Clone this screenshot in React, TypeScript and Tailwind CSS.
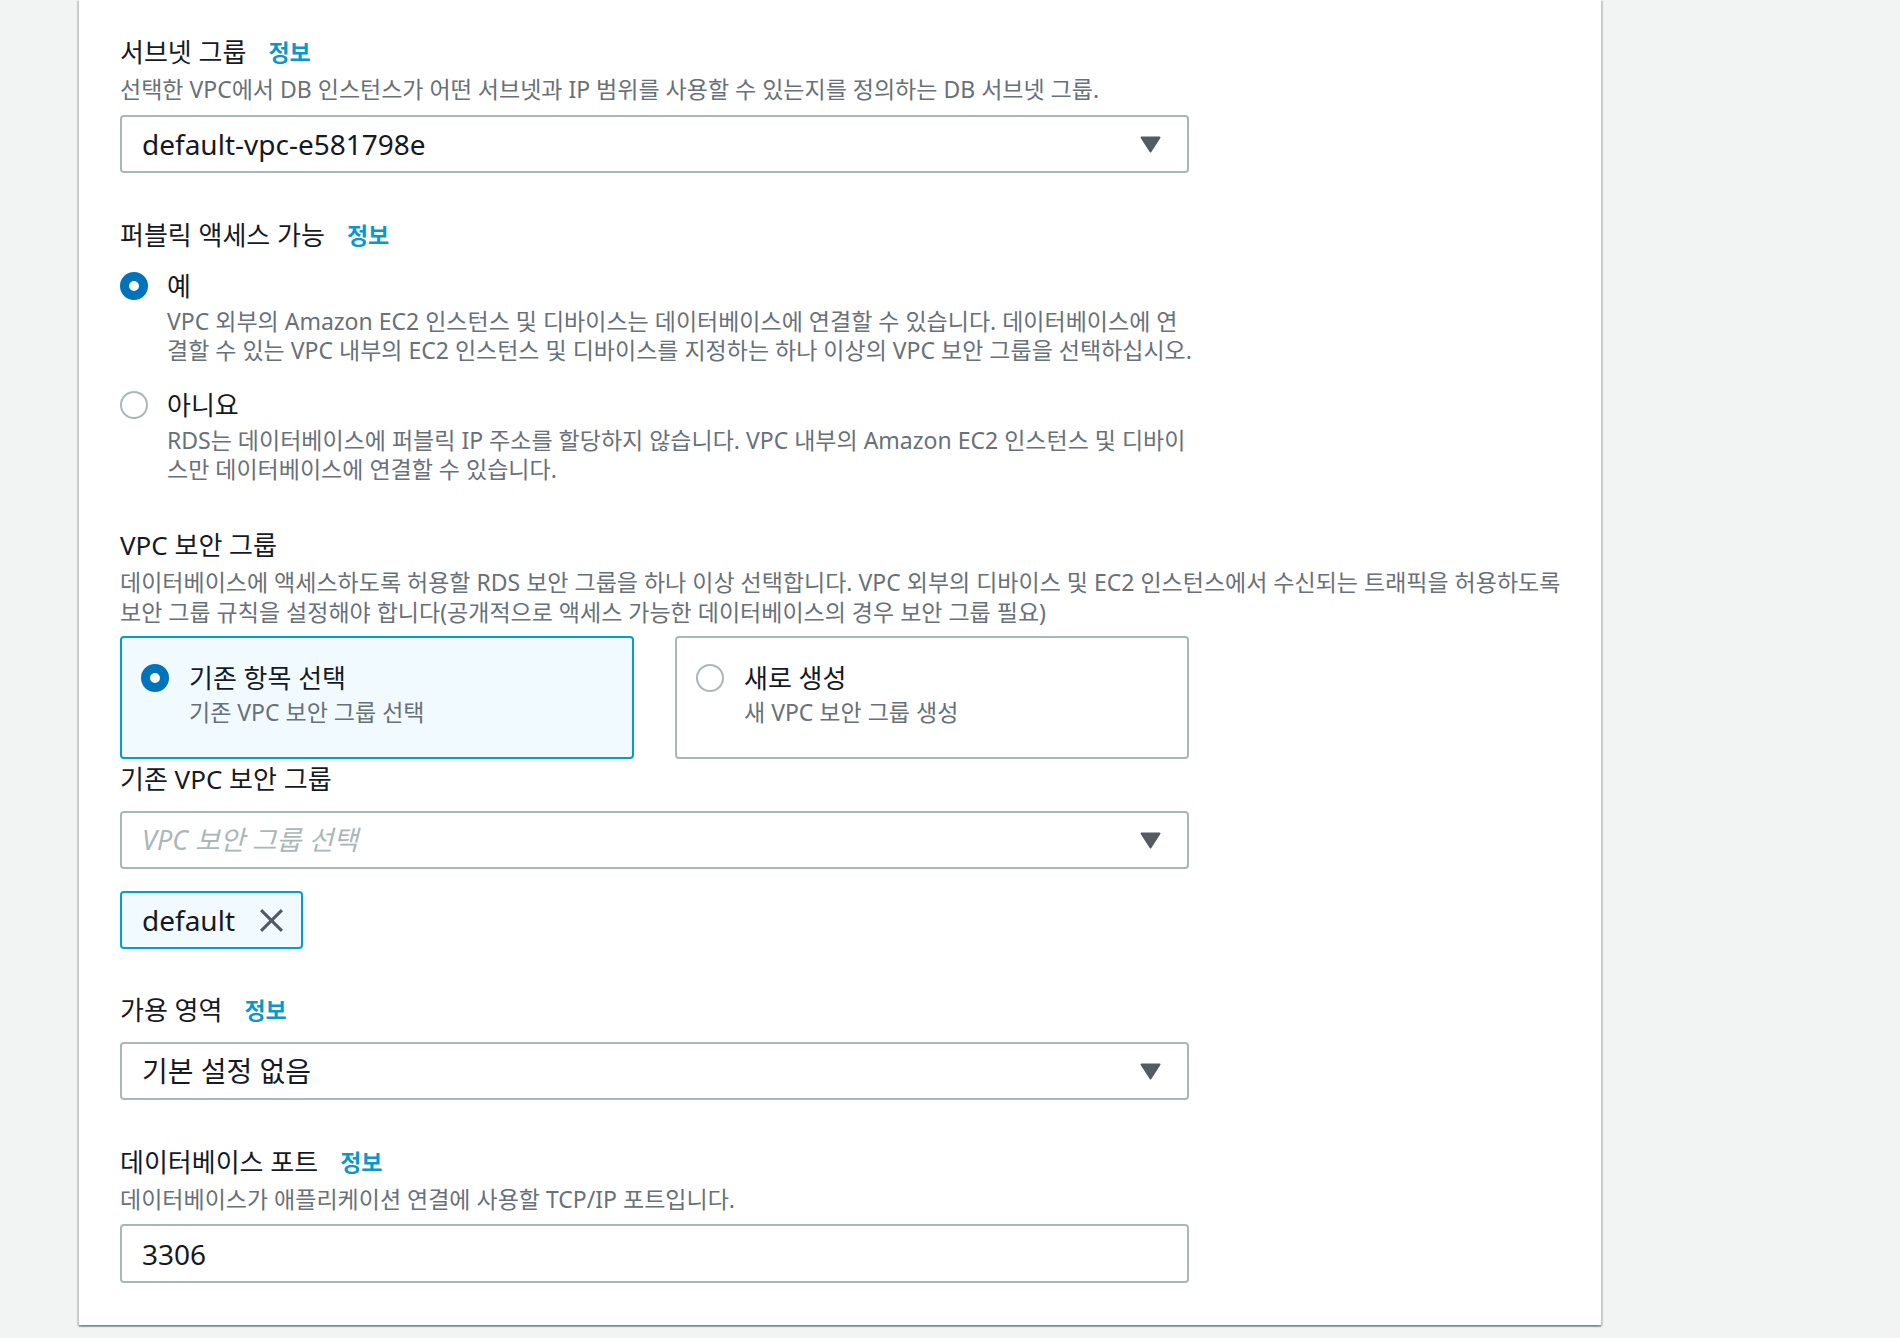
import { ReactNode } from "react"

const font = "font-['Noto_Sans','Noto_Sans_CJK_KR',sans-serif]"

function Info() {
  return <span className="ml-[22px] text-[23px] font-bold text-[#0a97c9]">정보</span>
}

function Label({ children, info }: { children: ReactNode; info?: boolean }) {
  return (
    <div className="flex items-center text-[26px] leading-[34px] text-[#16191f]">
      <span>{children}</span>
      {info && <Info />}
    </div>
  )
}

function Desc({ lines, className = "" }: { lines: string[]; className?: string }) {
  return (
    <p className={`text-[23px] leading-[29px] text-[#687078] ${className}`}>
      {lines.map((l, i) => (
        <span key={i} className="block whitespace-nowrap">
          {l}
        </span>
      ))}
    </p>
  )
}

function Caret() {
  return (
    <svg width="21" height="17" viewBox="0 0 21 17" className="shrink-0">
      <path d="M1.5 1.5h18L10.5 15.5z" fill="#545b64" stroke="#545b64" strokeWidth="2" strokeLinejoin="round" />
    </svg>
  )
}

function Select({ value, placeholder }: { value?: string; placeholder?: string }) {
  return (
    <div className="flex h-[58px] w-[1069px] items-center justify-between rounded-[4px] border-2 border-[#aab7b8] bg-white pl-[20px] pr-[26px]">
      {value ? (
        <span className="text-[28px] text-[#16191f]">{value}</span>
      ) : (
        <span className="text-[27px] italic text-[#aab7b8]">{placeholder}</span>
      )}
      <Caret />
    </div>
  )
}

function Radio({ checked }: { checked?: boolean }) {
  return (
    <span
      className={
        checked
          ? "block h-[28px] w-[28px] shrink-0 rounded-full border-[9px] border-[#0073bb] bg-white"
          : "block h-[28px] w-[28px] shrink-0 rounded-full border-2 border-[#aab7b8] bg-white"
      }
    />
  )
}

function RadioOption({ checked, title, lines }: { checked?: boolean; title: string; lines: string[] }) {
  return (
    <div className="flex gap-[19px]">
      <div className="flex h-[34px] items-center">
        <Radio checked={checked} />
      </div>
      <div>
        <div className="text-[26px] leading-[34px] text-[#16191f]">{title}</div>
        <Desc className="mt-[4px]" lines={lines} />
      </div>
    </div>
  )
}

function Tile({ checked, title, sub }: { checked?: boolean; title: string; sub: string }) {
  return (
    <div
      className={
        checked
          ? "h-[123px] flex-1 rounded-[4px] border-2 border-[#00a1c9] bg-[#f1faff] pl-[19px] pt-[23px]"
          : "h-[123px] flex-1 rounded-[4px] border-2 border-[#aab7b8] bg-white pl-[19px] pt-[23px]"
      }
    >
      <div className="flex gap-[20px]">
        <div className="flex h-[34px] items-center">
          <Radio checked={checked} />
        </div>
        <div>
          <div className="text-[26px] leading-[34px] text-[#16191f]">{title}</div>
          <div className="mt-[2px] text-[23px] leading-[30px] text-[#687078]">{sub}</div>
        </div>
      </div>
    </div>
  )
}

export default function App() {
  return (
    <div className={`min-h-screen bg-[#f2f3f3] ${font}`}>
      <div className="ml-[79px] w-[1522px] bg-white px-[41px] pb-[42px] pt-[35px] shadow-[0_2px_1px_0_rgba(0,28,36,0.3),2px_1px_1px_0_rgba(0,28,36,0.15),-2px_1px_1px_0_rgba(0,28,36,0.15)]">
        {/* 서브넷 그룹 */}
        <Label info>서브넷 그룹</Label>
        <Desc
          className="mt-[6px]"
          lines={["선택한 VPC에서 DB 인스턴스가 어떤 서브넷과 IP 범위를 사용할 수 있는지를 정의하는 DB 서브넷 그룹."]}
        />
        <div className="mt-[11px]">
          <Select value="default-vpc-e581798e" />
        </div>

        {/* 퍼블릭 액세스 */}
        <div className="mt-[45px]">
          <Label info>퍼블릭 액세스 가능</Label>
        </div>
        <div className="mt-[17px] flex flex-col gap-[23px]">
          <RadioOption
            checked
            title="예"
            lines={[
              "VPC 외부의 Amazon EC2 인스턴스 및 디바이스는 데이터베이스에 연결할 수 있습니다. 데이터베이스에 연",
              "결할 수 있는 VPC 내부의 EC2 인스턴스 및 디바이스를 지정하는 하나 이상의 VPC 보안 그룹을 선택하십시오.",
            ]}
          />
          <RadioOption
            title="아니요"
            lines={[
              "RDS는 데이터베이스에 퍼블릭 IP 주소를 할당하지 않습니다. VPC 내부의 Amazon EC2 인스턴스 및 디바이",
              "스만 데이터베이스에 연결할 수 있습니다.",
            ]}
          />
        </div>

        {/* VPC 보안 그룹 */}
        <div className="mt-[44px]">
          <Label>VPC 보안 그룹</Label>
        </div>
        <Desc
          className="mt-[5px] leading-[30px] text-[22.8px]"
          lines={[
            "데이터베이스에 액세스하도록 허용할 RDS 보안 그룹을 하나 이상 선택합니다. VPC 외부의 디바이스 및 EC2 인스턴스에서 수신되는 트래픽을 허용하도록",
            "보안 그룹 규칙을 설정해야 합니다(공개적으로 액세스 가능한 데이터베이스의 경우 보안 그룹 필요)",
          ]}
        />
        <div className="mt-[9px] flex w-[1069px] gap-[41px]">
          <Tile checked title="기존 항목 선택" sub="기존 VPC 보안 그룹 선택" />
          <Tile title="새로 생성" sub="새 VPC 보안 그룹 생성" />
        </div>

        <div className="mt-[3px]">
          <Label>기존 VPC 보안 그룹</Label>
        </div>
        <div className="mt-[15px]">
          <Select placeholder="VPC 보안 그룹 선택" />
        </div>
        <div className="mt-[22px] flex">
          <div className="flex h-[58px] items-center gap-[24px] rounded-[4px] border-2 border-[#00a1c9] bg-[#f1faff] pl-[20px] pr-[17px]">
            <span className="text-[28px] text-[#16191f]">default</span>
            <svg width="25" height="25" viewBox="0 0 24 24">
              <path d="M2 2L22 22M22 2L2 22" stroke="#545b64" strokeWidth="3" />
            </svg>
          </div>
        </div>

        {/* 가용 영역 */}
        <div className="mt-[44px]">
          <Label info>가용 영역</Label>
        </div>
        <div className="mt-[15px]">
          <Select value="기본 설정 없음" />
        </div>

        {/* 데이터베이스 포트 */}
        <div className="mt-[45px]">
          <Label info>데이터베이스 포트</Label>
        </div>
        <Desc className="mt-[6px]" lines={["데이터베이스가 애플리케이션 연결에 사용할 TCP/IP 포트입니다."]} />
        <div className="mt-[10px] flex h-[59px] w-[1069px] items-center rounded-[4px] border-2 border-[#aab7b8] bg-white pl-[20px]">
          <span className="text-[28px] text-[#16191f]">3306</span>
        </div>
      </div>
    </div>
  )
}
